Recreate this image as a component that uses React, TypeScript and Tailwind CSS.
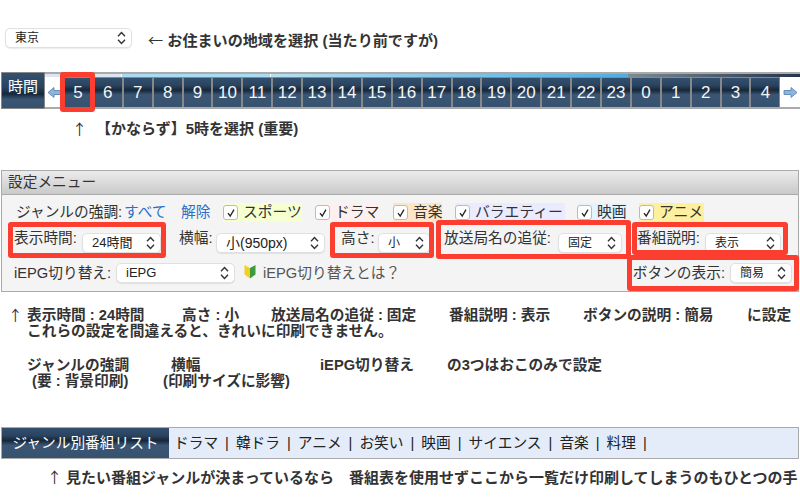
const hours = [5, 6, 7, 8, 9, 10, 11, 12, 13, 14, 15, 16, 17, 18, 19, 20, 21, 22, 23, 0, 1, 2, 3, 4];
const genres = ['ドラマ', '韓ドラ', 'アニメ', 'お笑い', '映画', 'サイエンス', '音楽', '料理'];

const navy = 'bg-[linear-gradient(#33506f_0%,#2a4460_25%,#16273a_42%,#3a5674_58%,#36526f_100%)]';

function Chevrons() {
  return (
    <svg className="h-[14px] w-[9px] shrink-0" viewBox="0 0 9 14" fill="none" stroke="#333" strokeWidth="1.4">
      <path d="M1 5.2 L4.5 1.6 L8 5.2" />
      <path d="M1 8.8 L4.5 12.4 L8 8.8" />
    </svg>
  );
}

function Select({ label, className }: { label: string; className: string }) {
  return (
    <div className={`flex h-5 shrink-0 items-center justify-between rounded-[5px] border border-[#e0e0e0] bg-white pl-[9px] pr-[5px] text-[12px] text-[#222] shadow-[0_1px_1px_rgba(0,0,0,0.08)] ${className}`}>
      <span className="whitespace-nowrap">{label}</span>
      <Chevrons />
    </div>
  );
}

function Genre({ label, className }: { label: string; className: string }) {
  return (
    <div className={`flex h-[19px] shrink-0 items-center ${className}`}>
      <div className="flex h-[15px] w-[15px] shrink-0 items-center justify-center rounded-[3px] border border-[#bbb] bg-white">
        <svg className="h-[10px] w-[10px]" viewBox="0 0 10 10" fill="none" stroke="#222" strokeWidth="1.3">
          <path d="M2 5.2 L4.2 8 L8 1.6" />
        </svg>
      </div>
      <span className="ml-[5px] whitespace-nowrap text-[14.8px] leading-none text-[#333]">{label}</span>
    </div>
  );
}

function Arrow({ flip }: { flip?: boolean }) {
  return (
    <svg className={`h-[13px] w-[15px] ${flip ? '' : '-scale-x-100'}`} viewBox="0 0 15 12">
      <path d="M1 4 H8 V1 L14 6 L8 11 V8 H1 Z" fill="#8fb3d9" stroke="#4f7db3" strokeWidth="0.8" />
    </svg>
  );
}

function Mark({ className }: { className: string }) {
  return <div className={`absolute rounded-[3px] border-[5px] border-[#fb3e30] ${className}`} />;
}

export default function App() {
  return (
    <div className="relative h-[498px] w-[800px] overflow-hidden bg-white text-[14.7px] text-[#333] [font-family:'Liberation_Sans','Noto_Sans_CJK_JP',sans-serif]">
      {/* region */}
      <div className="flex h-[72px] items-start pl-[5px] pt-[28px]">
        <Select label="東京" className="w-[127px] text-[12.5px]" />
        <span className="ml-4 whitespace-nowrap text-[15.1px] font-bold leading-[22px]">
          <span className="font-normal [font-family:'Noto_Sans_CJK_JP']">←</span> お住まいの地域を選択 (当たり前ですが)
        </span>
      </div>

      {/* time bar */}
      <div className="ml-[1px] flex h-[38px] w-[799px]">
        <div className="flex h-[37px] w-[44px] shrink-0 items-start justify-center border border-[#888] bg-[linear-gradient(#33506f_0%,#2a4460_40%,#16273a_60%,#3a5674_75%,#36526f_100%)] pt-[4px] text-[15px] leading-[20px] text-white">時間</div>
        <div className="flex h-[37px] min-w-0 flex-1 flex-col">
          <div className="flex h-[5px] shrink-0 border-t-2 border-[#aaa]">
            <div className="w-[76px] bg-[#dce6f2]" />
            <div className="ml-[1px] w-[148px] bg-[#a8dcf2]" />
            <div className="ml-[1px] w-[357px] bg-[linear-gradient(90deg,#b6e0f2,#4fade0)]" />
            <div className="flex-1 bg-[linear-gradient(90deg,#7d8a96,#24344a)]" />
          </div>
          <div className="flex h-[32px] border-b-2 border-[#aaa]">
            <div className="flex w-[18px] shrink-0 items-center justify-center bg-white"><Arrow /></div>
            {hours.map((h) => (
              <div key={h} className={`flex h-[30px] w-[29.9px] shrink-0 items-center justify-center border-x border-t border-[#888] ${navy} text-[17px] text-[#f4f4f4]`}>{h}</div>
            ))}
            <div className="flex min-w-0 flex-1 items-center justify-center bg-white"><Arrow flip /></div>
          </div>
        </div>
      </div>
      <div className="flex h-[60px] items-start pl-[72px] pt-[9px] text-[15px] font-bold leading-5">
        <span className="w-[24px] font-normal [font-family:'Noto_Sans_CJK_JP']">↑</span>
        <span className="whitespace-nowrap">【かならず】5時を選択 (重要)</span>
      </div>

      {/* settings */}
      <div className="ml-[1px] h-[122px] w-[798px] border border-[#aaa] bg-[#f4f4f4]">
        <div className="flex h-[24px] items-center border-b border-[#aaa] bg-[linear-gradient(#ececec,#c9c9c9)] pl-[6px] text-[#333]">設定メニュー</div>
        <div className="flex h-[27px] items-end pl-[14px] leading-none">
          <span className="mb-[2px] w-[108px] shrink-0 whitespace-nowrap">ジャンルの強調:</span>
          <span className="mb-[2px] w-[57px] shrink-0 whitespace-nowrap text-[#2f6fc8]">すべて</span>
          <span className="mb-[2px] w-[42px] shrink-0 whitespace-nowrap text-[#2f6fc8]">解除</span>
          <Genre label="スポーツ" className="w-[79px] bg-[#f5ffd0]" />
          <Genre label="ドラマ" className="ml-[13px] w-[65px] bg-[#fff0f0]" />
          <Genre label="音楽" className="ml-[13px] w-[49px] bg-[#fde6c8]" />
          <Genre label="バラエティー" className="ml-[13px] w-[110px] bg-[#ebebff]" />
          <Genre label="映画" className="ml-[12px] w-[50px] bg-[#e2f4ff]" />
          <Genre label="アニメ" className="ml-[12px] w-[65px] bg-[#fff0a0]" />
        </div>
        <div className="flex h-[31px] items-end pl-[12px]">
          <span className="mb-[5px] w-[68px] shrink-0 whitespace-nowrap leading-5">表示時間:</span>
          <Select label="24時間" className="w-[79px] text-[13px]" />
          <span className="mb-[5px] ml-[18px] w-[37px] shrink-0 whitespace-nowrap leading-5">横幅:</span>
          <Select label="小(950px)" className="w-[109px] text-[14px]" />
          <span className="mb-[5px] ml-[16px] w-[37px] shrink-0 whitespace-nowrap leading-5">高さ:</span>
          <Select label="小" className="w-[52px]" />
          <span className="mb-[5px] ml-[14px] w-[114px] shrink-0 whitespace-nowrap leading-5">放送局名の追従:</span>
          <Select label="固定" className="w-[64px]" />
          <span className="mb-[5px] ml-[15px] w-[68px] shrink-0 whitespace-nowrap leading-5">番組説明:</span>
          <Select label="表示" className="w-[76px]" />
        </div>
        <div className="flex h-[31px] items-start pl-[12px] pt-[10px]">
          <span className="w-[102px] shrink-0 whitespace-nowrap leading-5">iEPG切り替え:</span>
          <Select label="iEPG" className="w-[119px] text-[13px]" />
          <svg className="ml-[8px] mt-[1px] h-[15px] w-[14px] shrink-0" viewBox="0 0 13 15">
            <path d="M6.5 4 L6.5 14.5 L1 10.5 V1 Z" fill="#f0d020" />
            <path d="M6.5 4 L6.5 14.5 L12 10.5 V1 Z" fill="#3f9a3c" />
          </svg>
          <span className="ml-[6px] whitespace-nowrap leading-5 text-[#555]">iEPG切り替えとは？</span>
          <span className="ml-auto mr-[5px] whitespace-nowrap leading-5">ボタンの表示:</span>
          <Select label="簡易" className="mr-[6px] w-[62px]" />
        </div>
      </div>

      {/* notes */}
      <div className="pt-[15px] text-[14.7px] font-bold leading-[16px]">
        <div className="flex whitespace-nowrap">
          <span className="ml-[8px] w-[19px] font-normal [font-family:'Noto_Sans_CJK_JP']">↑</span>
          <span className="w-[155px]">表示時間 : 24時間</span>
          <span className="w-[89px]">高さ : 小</span>
          <span className="w-[178px]">放送局名の追従 : 固定</span>
          <span className="w-[134px]">番組説明 : 表示</span>
          <span className="w-[164px]">ボタンの説明 : 簡易</span>
          <span>に設定</span>
        </div>
        <div className="ml-[27px] whitespace-nowrap">これらの設定を間違えると、きれいに印刷できません。</div>
        <div className="mt-[18px] flex whitespace-nowrap">
          <span className="ml-[27px] w-[144px]">ジャンルの強調</span>
          <span className="w-[149px]">横幅</span>
          <span className="w-[127px]">iEPG切り替え</span>
          <span>の3つはおこのみで設定</span>
        </div>
        <div className="flex whitespace-nowrap">
          <span className="ml-[32px] w-[131px]">(要 : 背景印刷)</span>
          <span>(印刷サイズに影響)</span>
        </div>
      </div>

      {/* genre list */}
      <div className="ml-[1px] mt-[38px] flex h-[32px] w-[798px] border border-[#aaa] bg-[#e4ecf9]">
        <div className={`flex w-[167px] shrink-0 items-center justify-center whitespace-nowrap ${navy} text-[14.7px] text-white`}>ジャンル別番組リスト</div>
        <div className="flex items-center gap-[7px] whitespace-nowrap pl-[5px] text-[#222]">
          {genres.map((g) => (
            <span key={g} className="flex items-center gap-[7px]">
              {g}
              <span className="font-normal">|</span>
            </span>
          ))}
        </div>
      </div>
      <div className="whitespace-nowrap pl-[47px] pt-[8px] text-[15px] font-bold leading-5">
        <span className="mr-[4px] font-normal [font-family:'Noto_Sans_CJK_JP']">↑</span>見たい番組ジャンルが決まっているなら　番組表を使用せずここから一覧だけ印刷してしまうのもひとつの手
      </div>

      {/* red markers */}
      <Mark className="left-[60px] top-[72px] h-[40px] w-[35px]" />
      <Mark className="left-[8px] top-[222px] h-[36px] w-[158px]" />
      <Mark className="left-[330px] top-[222px] h-[36px] w-[104px]" />
      <Mark className="left-[436px] top-[220px] h-[39px] w-[195px]" />
      <Mark className="left-[632px] top-[222px] h-[33px] w-[156px]" />
      <Mark className="left-[627px] top-[255px] h-[36px] w-[172px]" />
    </div>
  );
}
